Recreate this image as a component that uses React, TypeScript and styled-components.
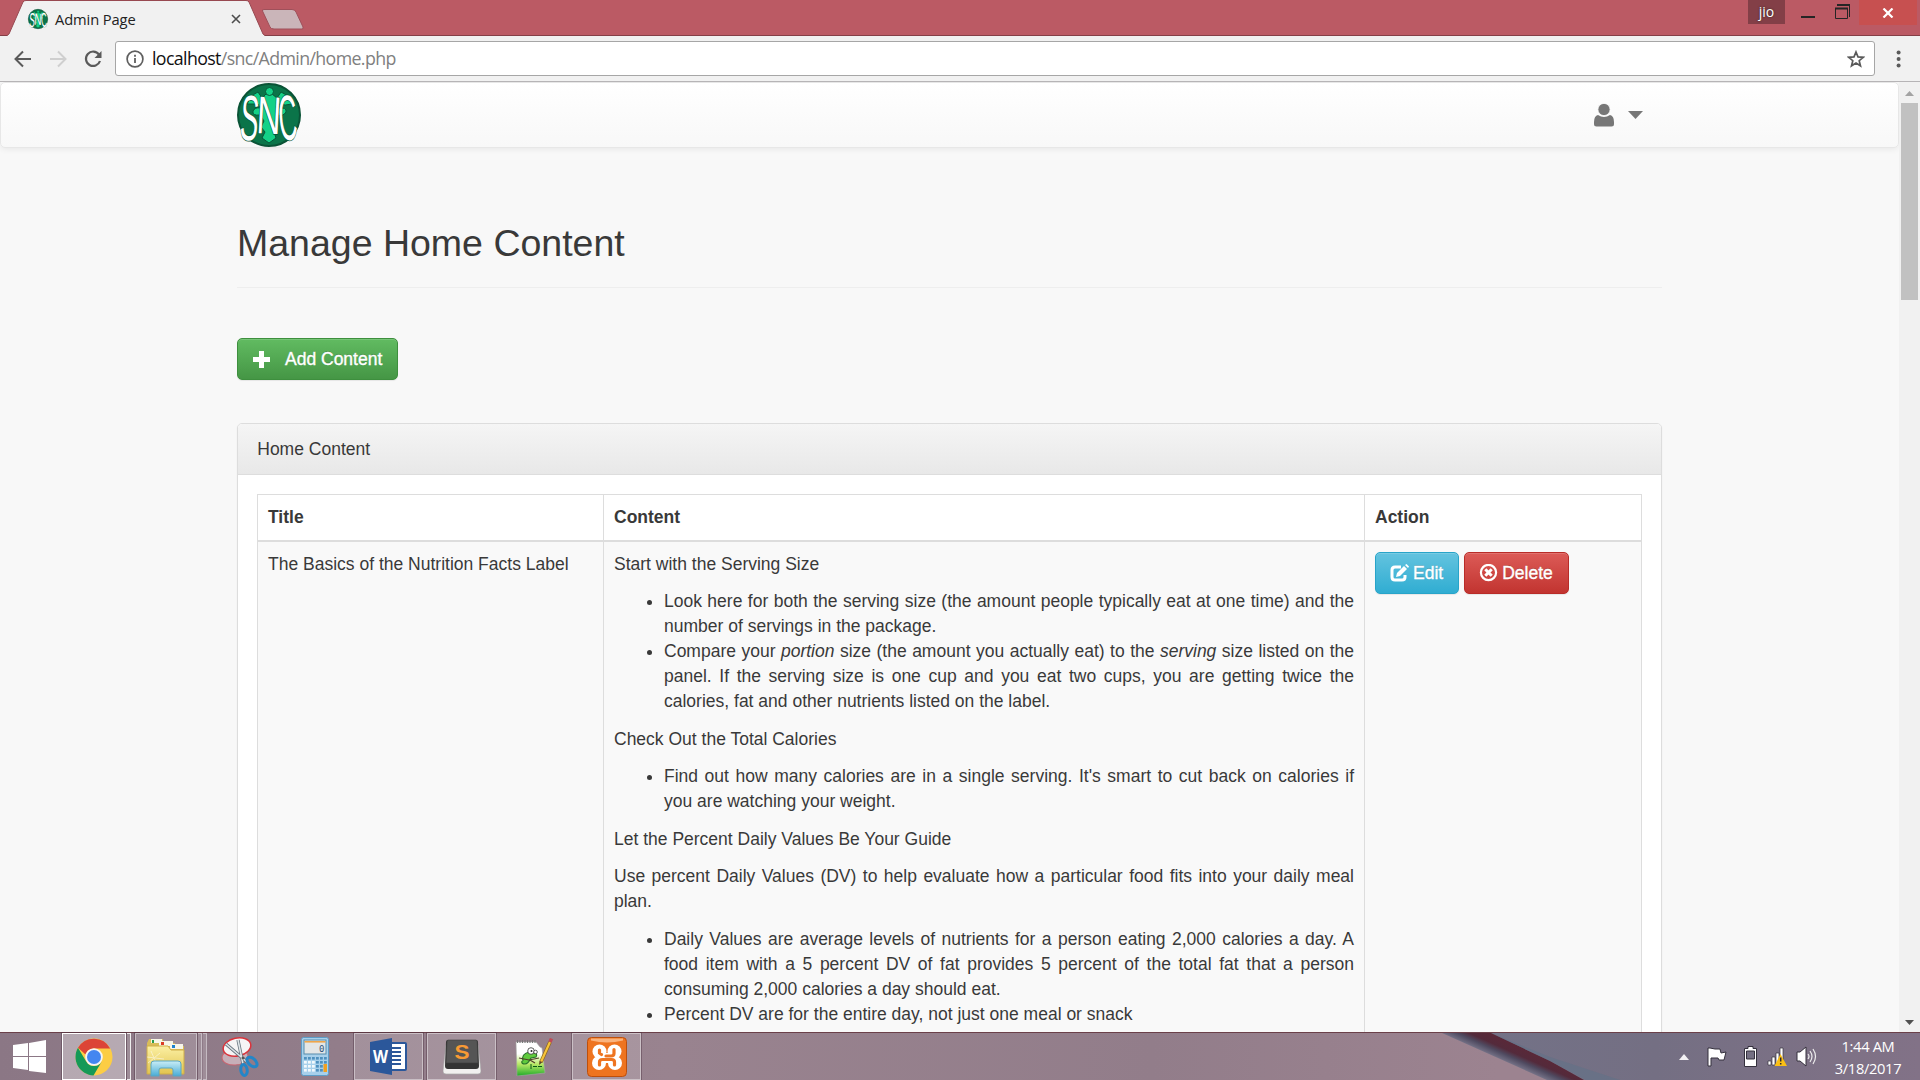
import React from "react";
import styled, { createGlobalStyle, css } from "styled-components";

const GlobalStyle = createGlobalStyle`
  *, *::before, *::after { box-sizing: border-box; }
  html, body { margin: 0; padding: 0; }
  body { overflow: hidden; background: #f8f8f8; }
  svg { display: block; flex: none; }
`;

const uiFont = `"Open Sans", "Noto Sans", sans-serif`;

const Screen = styled.div`
  width: 1920px;
  height: 1080px;
  display: flex;
  flex-direction: column;
  overflow: hidden;
  background: #f8f8f8;
  font-family: "Liberation Sans", Arial, sans-serif;
`;

/* Browser chrome */

const TitleBar = styled.header`
  height: 36px;
  flex: none;
  display: flex;
  align-items: flex-start;
  background: #bb5a64;
  border-bottom: 1px solid #843f47;
`;

const Tab = styled.div`
  position: relative;
  width: 258px;
  height: 36px;
  margin-left: 7px;
  padding: 0 24px 0 21px;
  display: flex;
  align-items: center;
  font: 14.7px ${uiFont};
  color: #222;
`;

const TabShape = styled.svg`
  position: absolute;
  left: 0;
  top: 0;
`;

const TabTitle = styled.span`
  position: relative;
  margin: 1px auto 0 7px;
  letter-spacing: -0.1px;
`;

const OnTab = styled.span`
  position: relative;
  top: 1px;
`;

const NewTab = styled.svg`
  margin: 9px 0 0 -4px;
`;

const WindowControls = styled.div`
  margin-left: auto;
  display: flex;
  align-items: flex-start;
  padding-right: 3px;
`;

const UserBadge = styled.div`
  width: 37px;
  height: 24px;
  background: #833f47;
  color: #fff;
  font: 14px/23px ${uiFont};
  text-align: center;
  text-shadow: 0 0 2px #222;
`;

const CloseButton = styled.div`
  width: 58px;
  height: 25px;
  background: #c75050;
  display: flex;
  align-items: center;
  justify-content: center;
`;

const Toolbar = styled.div`
  height: 46px;
  flex: none;
  display: flex;
  align-items: center;
  padding: 0 0 0 14px;
  background: #f1f1f1;
  border-bottom: 1px solid #b6b4b6;
`;

const NavIcons = styled.div`
  width: 101px;
  flex: none;
  display: flex;
  gap: 17px;
`;

const AddressBar = styled.div`
  width: 1760px;
  flex: none;
  height: 35px;
  display: flex;
  align-items: center;
  padding: 0 9px 0 10px;
  background: #fff;
  border: 1px solid #a6a6a6;
  border-radius: 3px;
`;

const Url = styled.span`
  margin: 0 auto 0 8px;
  font: 17.8px/33px ${uiFont};
  letter-spacing: -0.63px;
  color: #808080;
  b { font-weight: 400; color: #111; }
`;

/* Page */

const Viewport = styled.div`
  flex: 1;
  min-height: 0;
  display: flex;
`;

const Page = styled.main`
  width: 1899px;
  overflow: hidden;
  font-size: 17.5px;
  line-height: 25px;
  color: #393939;
`;

const Navbar = styled.nav`
  height: 66px;
  padding: 0 236px;
  display: flex;
  align-items: flex-start;
  justify-content: space-between;
  background: linear-gradient(#fff, #f8f8f8);
  border: 1px solid #e7e7e7;
  border-radius: 5px;
  box-shadow: inset 0 1px 0 rgba(255, 255, 255, 0.15), 0 1px 6px rgba(0, 0, 0, 0.075);
`;

const UserMenu = styled.div`
  display: flex;
  align-items: center;
  gap: 14px;
  padding: 20px 19px 0 0;
`;

const Container = styled.div`
  width: 1425px;
  margin: 75px 0 0 237px;
`;

const PageHeader = styled.div`
  padding-bottom: 10.25px;
  border-bottom: 1px solid #eee;
`;

const Heading = styled.h2`
  margin: 0 0 12.5px;
  font-size: 37.5px;
  font-weight: 500;
  line-height: 41.25px;
`;

type Tone = "success" | "info" | "danger";
const tones: Record<Tone, ReturnType<typeof css>> = {
  success: css`background: linear-gradient(#61bb61, #459645); border-color: #3e8f3e;`,
  info: css`background: linear-gradient(#63c3df, #30add2); border-color: #28a4c9;`,
  danger: css`background: linear-gradient(#dc5b57, #c23430); border-color: #b92c28;`,
};

const Button = styled.button<{ $tone: Tone; $gap?: number }>`
  height: 42px;
  padding: 0 15px 0 14px;
  display: inline-flex;
  align-items: center;
  gap: ${(p) => p.$gap ?? 4}px;
  border: 1px solid;
  border-radius: 5px;
  ${(p) => tones[p.$tone]}
  color: #fff;
  font: 17.5px/25px "Liberation Sans", Arial, sans-serif;
  -webkit-text-stroke: 0.35px #fff;
  text-shadow: 0 -1px 0 rgba(0, 0, 0, 0.2);
  box-shadow: inset 0 1px 0 rgba(255, 255, 255, 0.15), 0 1px 1px rgba(0, 0, 0, 0.075);
  white-space: nowrap;
`;

const AddRow = styled.div`
  display: flex;
  padding: 50px 0 43px;
`;

const Panel = styled.section`
  background: #fff;
  border: 1px solid #ddd;
  border-radius: 5px;
  box-shadow: 0 1px 2px rgba(0, 0, 0, 0.05);
`;

const PanelHeading = styled.div`
  height: 51px;
  padding: 12.5px 19.25px;
  background: linear-gradient(#f5f5f5, #e8e8e8);
  border-bottom: 1px solid #ddd;
  border-radius: 4px 4px 0 0;
`;

const PanelBody = styled.div`
  padding: 19px;
`;

const Table = styled.div`
  display: grid;
  grid-template-columns: 346px 761px 277px;
  border: 1px solid #ddd;
  border-right: 0;
`;

const Cell = styled.div<{ $head?: boolean }>`
  padding: 10px;
  border-right: 1px solid #ddd;
  ${(p) =>
    p.$head
      ? css`
          height: 47px;
          border-bottom: 2px solid #ddd;
          font-weight: 700;
        `
      : css`
          height: 620px;
          background: #f9f9f9;
        `}
`;

const Article = styled.div`
  margin-top: -0.25px;
  text-align: justify;
  p { margin: 0 0 12.5px; }
  ul { margin: 0 0 12.5px; padding-left: 50px; }
`;

const Actions = styled.div`
  display: flex;
  gap: 5px;
`;

const Scrollbar = styled.aside`
  width: 21px;
  padding: 9px 2px 7px;
  display: flex;
  flex-direction: column;
  align-items: center;
  background: #f1f1f1;
`;

const Thumb = styled.div`
  width: 17px;
  height: 197px;
  margin: 7px 0 auto;
  background: #c1c1c1;
`;

/* Taskbar */

const Taskbar = styled.footer`
  position: relative;
  height: 48px;
  flex: none;
  display: flex;
  border-top: 1px solid #6b4049;
  background: #927d8a;
`;

const Wallpaper = styled.svg`
  position: absolute;
  inset: 0;
`;

const TaskRow = styled.div`
  position: relative;
  flex: 1;
  display: flex;
  align-items: stretch;
`;

const Task = styled.div<{ $w: number; $ml?: number; $open?: boolean; $active?: boolean }>`
  width: ${(p) => p.$w}px;
  flex: none;
  margin-left: ${(p) => p.$ml ?? 0}px;
  display: flex;
  align-items: center;
  justify-content: center;
  ${(p) =>
    p.$open &&
    css`
      background: rgba(255, 255, 255, ${p.$active ? 0.36 : 0.15});
      border: 1px solid ${p.$active ? "#fff" : "rgba(255,255,255,.42)"};
      outline: 1px solid rgba(70, 45, 60, 0.4);
    `}
`;

const StackEdge = styled.div<{ $active?: boolean }>`
  width: 4px;
  margin-left: 1px;
  border: 1px solid ${(p) => (p.$active ? "#eee" : "rgba(255,255,255,.4)")};
  border-left: 0;
  background: rgba(255, 255, 255, 0.15);
`;

const Tray = styled.div`
  position: relative;
  display: flex;
  align-items: center;
  padding-right: 16px;
`;

const TrayIcon = styled.div<{ $ml: number }>`
  margin-left: ${(p) => p.$ml}px;
`;

const Clock = styled.div`
  width: 72px;
  margin-left: 15px;
  padding-top: 1px;
  text-align: center;
  color: #fff;
  font: 14.7px/22px ${uiFont};
  letter-spacing: -0.35px;
  white-space: nowrap;
`;

function SncLogo({ size }: { size: number }) {
  return (
    <svg width={size} height={size} viewBox="0 0 64 64" overflow="visible">
      <circle cx="32" cy="32" r="31" fill="#0b7449" stroke="#0a5336" strokeWidth="2" />
      <g fill="#14d187" stroke="#075637" strokeWidth="1">
        <path d="M10 21Q14 12 21 9L25 15 29 11H35L40 15 44 9Q53 13 55 21 48 23 42 21L41 25Q50 24 49 29 46 34 40 32L38 38 41 44 37 49 39 55 32 60 25 55 28 49 24 44 27 38 23 32Q15 33 16 28 18 24 23 25L21 21Z" />
        <circle cx="32.500" cy="8.500" r="4" />
      </g>
      <g fill="#fff" stroke="#075637" strokeWidth="1.500" paintOrder="stroke" fontFamily="Liberation Sans, Arial, sans-serif">
        <text transform="translate(2 56.500) rotate(4) scale(.43 1)" fontSize="64">S</text>
        <text transform="translate(19 50) rotate(3) scale(.63 1)" fontSize="53">N</text>
        <text transform="translate(43 57.500) rotate(-4) scale(.4 1)" fontSize="64">C</text>
      </g>
    </svg>
  );
}

const Glyph = ({ children }: { children: React.ReactNode }) => (
  <svg width="19" height="19" viewBox="0 0 19 19" fill="none" stroke="#fff">
    {children}
  </svg>
);

const Triangle = ({ w, h, color, up }: { w: number; h: number; color: string; up?: boolean }) => (
  <svg width={w} height={h} viewBox="0 0 10 10" preserveAspectRatio="none">
    <path d={up ? "M0 10 5 0 10 10z" : "M0 0H10L5 10z"} fill={color} />
  </svg>
);

function Chrome() {
  return (
    <svg width="38" height="38" viewBox="0 0 38 38">
      <circle cx="19" cy="19" r="18.500" fill="#fccd45" />
      <path d="M3 9.700A18.500 18.500 0 0 1 35.200 10.500H19a9 9 0 0 0-8.500 6z" fill="#dc4437" />
      <path d="M3 9.700A18.500 18.500 0 0 0 18.500 37.500L26.800 23.500A9 9 0 0 1 11.200 23.500z" fill="#159957" />
      <circle cx="19" cy="19" r="8.800" fill="#f5f5f5" />
      <circle cx="19" cy="19" r="7" fill="#4486f0" />
    </svg>
  );
}

function Explorer() {
  return (
    <svg width="40" height="40" viewBox="0 0 40 40">
      <defs>
        <linearGradient id="folder" x2="0" y2="1"><stop stopColor="#fbf0a4" /><stop offset="1" stopColor="#e2c44f" /></linearGradient>
        <linearGradient id="stand" x2="0" y2="1"><stop stopColor="#c9edf6" /><stop offset="1" stopColor="#49acd6" /></linearGradient>
      </defs>
      <path d="M3 2h14v4h12v3h9v28H1V6z" fill="#d9bd58" />
      <path d="M5 2h11v4H5z" fill="#f7f6e8" /><path d="M6 3h2v3H6z" fill="#299d48" />
      <path d="M13 4h14v5H13z" fill="#f7f6e8" /><path d="M15 5h3v3h-3z" fill="#dc3d24" />
      <path d="M24 7h13v5H24z" fill="#f7f6e8" /><path d="M26 8h3v3h-3z" fill="#1d83ce" />
      <path d="M1 9h21l3 4h13v24H1z" fill="url(#folder)" stroke="#cfae48" />
      <path d="M2 26 14 16M5 14l6 14M1 20l17 2" stroke="#fff" opacity=".5" />
      <path d="M5 39V27q0-3 3-3h24q3 0 3 3v12h-8v-6q0-2-2-2H15q-2 0-2 2v6z" fill="url(#stand)" stroke="#5ba7c3" />
    </svg>
  );
}

function Snipping() {
  return (
    <svg width="40" height="42" viewBox="0 0 40 42">
      <ellipse cx="14" cy="21" rx="13" ry="8" fill="#c6afb8" stroke="#ca646f" transform="rotate(-5 14 21)" />
      <ellipse cx="16" cy="11" rx="14" ry="9" fill="#f6f4f5" stroke="#d9343c" strokeWidth="1.500" transform="rotate(-12 16 11)" />
      <path d="m5 8 21 18M17 4l5 24" stroke="#66737d" strokeWidth="3.200" /><path d="m5 8 21 18M17 4l5 24" stroke="#dfe5e8" strokeWidth="1.600" />
      <g fill="none" stroke="#2386c7" strokeWidth="3"><ellipse cx="31" cy="26" rx="3.500" ry="6" transform="rotate(-48 31 26)" /><ellipse cx="23" cy="34" rx="3.200" ry="5.500" transform="rotate(-8 23 34)" /></g>
      <circle cx="22" cy="22" r="1.500" fill="#555" />
    </svg>
  );
}

function Calculator() {
  return (
    <svg width="28" height="39" viewBox="0 0 28 39">
      <rect x=".5" y=".5" width="27" height="38" rx="2" fill="#a7d0eb" stroke="#5d9dc7" />
      <rect x="3" y="3" width="22" height="14" fill="#e3e6e6" stroke="#568bac" />
      <path d="M3.500 4.800h21" stroke="#efa343" strokeWidth="1.500" />
      <text x="18" y="15" fontFamily="DejaVu Sans Mono, monospace" fontSize="9" fill="#315579">0</text>
      {[20, 24, 28, 32].map((y) => [3, 7, 11, 15, 19, 23].map((x) => <rect key={`${x}-${y}`} x={x} y={y} width="2.800" height="2.600" fill={x < 12 && y > 20 ? "#f3f9fc" : "#4f91bf"} />))}
      <rect x="22.500" y="27" width="3.500" height="8" fill="#f2a01e" />
    </svg>
  );
}

function Word() {
  return (
    <svg width="37" height="37" viewBox="0 0 37 37">
      <rect x="18" y="5" width="18" height="27" rx="1" fill="#fff" stroke="#2b579a" strokeWidth="2" />
      <path d="M20 10h11M20 14h11M20 18h11M20 22h11M20 26h11" stroke="#2b579a" strokeWidth="2" />
      <path d="M0 4 22 0v37L0 33z" fill="#2b579a" />
      <text x="3" y="25" textLength="15" lengthAdjust="spacingAndGlyphs" fontFamily="Open Sans, sans-serif" fontWeight="700" fontSize="17" fill="#fff">W</text>
    </svg>
  );
}

function Sublime() {
  return (
    <svg width="38" height="36" viewBox="0 0 38 36">
      <path d="M3 6h32l3 26q0 3-3 3H3q-3 0-3-3z" fill="#f1f0ef" stroke="#aaa" strokeWidth=".7" />
      <path d="M5 1h28q2 0 2 2l1 24q0 3-3 3H5q-3 0-3-3L3 3q0-2 2-2z" fill="#343434" />
      <path d="M5 1h28q1 0 1.200 2l.8 21H3L4 3q0-2 1-2z" fill="#555" stroke="#3c3c3c" strokeWidth=".6" />
      <text x="11.500" y="20" textLength="15" lengthAdjust="spacingAndGlyphs" fontFamily="Liberation Sans, Arial, sans-serif" fontWeight="700" fontSize="20" fill="#f89a34">S</text>
    </svg>
  );
}

function NotepadPlus() {
  return (
    <svg width="39" height="38" viewBox="0 0 39 38">
      <defs><linearGradient id="sheet" x2="0" y2="1"><stop offset=".35" stopColor="#fff" /><stop offset=".65" stopColor="#b9e967" /><stop offset="1" stopColor="#1faa28" /></linearGradient></defs>
      <path d="M1 4h20l4 5 2 1 3 25L2 38z" fill="url(#sheet)" stroke="#a5aaa5" strokeWidth=".6" />
      <path d="M2 3.500h19" stroke="#777" strokeWidth="3" strokeDasharray="1 1.500" />
      <path d="M8 23q-2-7 6-9l5 0q4 2 2 5l-5 1q-3 6-6 6-4 0-3-3" fill="#60ca3c" stroke="#28752c" strokeWidth="1.200" />
      <circle cx="16" cy="13" r="3.300" fill="#fff" stroke="#333" strokeWidth=".8" /><circle cx="20.500" cy="14" r="1.800" fill="#fff" stroke="#333" strokeWidth=".8" />
      <circle cx="16.500" cy="13" r="1" fill="#222" />
      <path d="m4 20 10 2 10-2m-9 2 5 3" fill="none" stroke="#503d28" strokeWidth="1.200" />
      <path d="M16 26v5m2-2.500h4m1 0h4" stroke="#0b5916" />
      <path d="m26 24 9-20" stroke="#8c6517" strokeWidth="3.500" /><path d="m26 24 9-20" stroke="#f8c43b" strokeWidth="2.200" />
      <path d="m35 4 1.500-3.500" stroke="#bf4b56" strokeWidth="3.500" /><path d="m24 27 .5-4 3 1z" fill="#5b4428" />
    </svg>
  );
}

function Xampp() {
  return (
    <svg width="40" height="40" viewBox="0 0 40 40">
      <rect x=".5" y=".5" width="39" height="39" rx="4" fill="#ee7420" stroke="#bd4f0c" />
      <path d="M4 1.500h32v2q-16 4-32 0z" fill="#fab37d" />
      <g fill="#fff">
        <circle cx="12.500" cy="14.500" r="7" />
        <circle cx="27.500" cy="14.500" r="7" />
        <circle cx="12" cy="26" r="7" />
        <circle cx="28" cy="26" r="7" />
        <path d="M13 16h14v10H13z" />
      </g>
      <path d="M12.500 13v3l2 1.500M27 12.500v4q0 2.500-3 2.500h-5M12.500 28v-3q0-2.500 3-2.500h9q3 0 3 2.500v3" fill="none" stroke="#ee7420" strokeWidth="3.200" strokeLinecap="round" />
    </svg>
  );
}

export default function App() {
  return (
    <Screen>
      <GlobalStyle />
      <TitleBar>
        <Tab>
          <TabShape width="258" height="36">
            <path d="M0 36 2 34 16 2Q17 .5 19 .5H239Q241 .5 242 2L256 34 258 36z" fill="#f1f1f1" />
            <path d="M0 35.500 2 34 16 2Q17 .5 19 .5H239Q241 .5 242 2L256 34 258 35.500" fill="none" stroke="#984951" />
          </TabShape>
          <OnTab><SncLogo size={20} /></OnTab>
          <TabTitle>Admin Page</TabTitle>
          <OnTab>
            <svg width="10" height="10"><path d="m1 1 8 8m0-8-8 8" stroke="#4d4d4d" strokeWidth="1.600" /></svg>
          </OnTab>
        </Tab>
        <NewTab width="44" height="21">
          <path d="M3 .5H31Q34 .5 35 3L42 18Q42.500 20 41 20H13Q10 20 9 18L1.500 2Q1 .5 3 .5z" fill="#cab5b9" stroke="#9f505a" />
        </NewTab>
        <WindowControls>
          <UserBadge>jio</UserBadge>
          <svg width="74" height="25">
            <path d="M16 17h14" stroke="#252525" strokeWidth="2" />
            <path d="M50.500 8.500h12v10h-12z" fill="none" stroke="#252525" />
            <path d="M50 8.500h13M52 5h13" stroke="#252525" strokeWidth="2" />
            <path d="M64.500 5v12" stroke="#252525" />
          </svg>
          <CloseButton>
            <svg width="12" height="10"><path d="m1.500.5 9 9m0-9-9 9" stroke="#fff" strokeWidth="2.200" /></svg>
          </CloseButton>
        </WindowControls>
      </TitleBar>

      <Toolbar>
        <NavIcons>
          <svg width="18" height="18" fill="none" stroke="#5a5a5a" strokeWidth="2"><path d="M17 9H2M9 1.500 1.500 9 9 16.500" /></svg>
          <svg width="18" height="18" fill="none" stroke="#cfcfcf" strokeWidth="2"><path d="M1 9h15M9 1.500 16.500 9 9 16.500" /></svg>
          <svg width="18" height="18"><path d="M15 4.500A7.200 7.200 0 1 0 16 11" fill="none" stroke="#5a5a5a" strokeWidth="2.200" /><path d="M17.500 1v7h-7z" fill="#5a5a5a" /></svg>
        </NavIcons>
        <AddressBar>
          <svg width="18" height="18"><circle cx="9" cy="9" r="7.900" fill="none" stroke="#5f5f5f" strokeWidth="1.700" /><path d="M9 8v5M9 4.800v2" stroke="#5f5f5f" strokeWidth="1.800" /></svg>
          <Url><b>localhost</b>/snc/Admin/home.php</Url>
          <svg width="18" height="18" viewBox="0 0 18 18"><path d="m9 2 2 4.900 5.200.4-4 3.400 1.300 5.100L9 13l-4.500 2.800 1.300-5.100-4-3.400 5.200-.4z" fill="none" stroke="#5a5a5a" strokeWidth="1.700" /></svg>
        </AddressBar>
        <svg width="45" height="20" fill="#5a5a5a"><circle cx="23.600" cy="3.500" r="2" /><circle cx="23.600" cy="10" r="2" /><circle cx="23.600" cy="16.500" r="2" /></svg>
      </Toolbar>

      <Viewport>
        <Page>
          <Navbar>
            <SncLogo size={64} />
            <UserMenu>
              <svg width="20" height="24" viewBox="0 0 20 24" fill="#777">
                <path d="M0 19q0-6 4-7 6 4 12 0 4 1 4 7v2q0 2.500-2.500 2.500h-15Q0 23.500 0 21z" />
                <circle cx="10" cy="6.500" r="6.100" stroke="#fcfcfc" strokeWidth=".8" />
              </svg>
              <Triangle w={15} h={8} color="#777" />
            </UserMenu>
          </Navbar>
          <Container>
            <PageHeader><Heading>Manage Home Content</Heading></PageHeader>
            <AddRow>
              <Button $tone="success" $gap={14}>
                <Glyph><path d="M9.500 1v17M1 9.500h17" strokeWidth="5" /></Glyph>
                Add Content
              </Button>
            </AddRow>
            <Panel>
              <PanelHeading>Home Content</PanelHeading>
              <PanelBody>
                <Table>
                  <Cell $head>Title</Cell>
                  <Cell $head>Content</Cell>
                  <Cell $head>Action</Cell>
                  <Cell>The Basics of the Nutrition Facts Label</Cell>
                  <Cell>
                    <Article>
                      <p>Start with the Serving Size</p>
                      <ul>
                        <li>Look here for both the serving size (the amount people typically eat at one time) and the number of servings in the package.</li>
                        <li>Compare your <em>portion</em> size (the amount you actually eat) to the <em>serving</em> size listed on the panel. If the serving size is one cup and you eat two cups, you are getting twice the calories, fat and other nutrients listed on the label.</li>
                      </ul>
                      <p>Check Out the Total Calories</p>
                      <ul>
                        <li>Find out how many calories are in a single serving. It's smart to cut back on calories if you are watching your weight.</li>
                      </ul>
                      <p>Let the Percent Daily Values Be Your Guide</p>
                      <p>Use percent Daily Values (DV) to help evaluate how a particular food fits into your daily meal plan.</p>
                      <ul>
                        <li>Daily Values are average levels of nutrients for a person eating 2,000 calories a day. A food item with a 5 percent DV of fat provides 5 percent of the total fat that a person consuming 2,000 calories a day should eat.</li>
                        <li>Percent DV are for the entire day, not just one meal or snack</li>
                      </ul>
                    </Article>
                  </Cell>
                  <Cell>
                    <Actions>
                      <Button $tone="info">
                        <Glyph>
                          <path d="M11 3H5Q2 3 2 6v7q0 3 3 3h7q3 0 3-3v-2" strokeWidth="3" />
                          <path d="m6 13 1-4 7-7 3 3-7 7z" fill="#fff" stroke="none" />
                          <path d="m15 1 1.500-1L19 2.500 18 4z" fill="#fff" stroke="none" />
                        </Glyph>
                        Edit
                      </Button>
                      <Button $tone="danger">
                        <Glyph>
                          <circle cx="9.500" cy="8.500" r="7.600" strokeWidth="2.200" />
                          <path d="m6.300 5.300 6.400 6.400m0-6.400-6.400 6.400" strokeWidth="3" />
                        </Glyph>
                        Delete
                      </Button>
                    </Actions>
                  </Cell>
                </Table>
              </PanelBody>
            </Panel>
          </Container>
        </Page>
        <Scrollbar>
          <Triangle w={9} h={5} color="#a3a3a3" up />
          <Thumb />
          <Triangle w={9} h={5} color="#505050" />
        </Scrollbar>
      </Viewport>

      <Taskbar>
        <Wallpaper width="1920" height="47">
          <defs>
            <linearGradient id="left"><stop stopColor="#8b7785" /><stop offset=".35" stopColor="#99838f" /><stop offset=".6" stopColor="#927d8a" /><stop offset=".78" stopColor="#9c8390" /></linearGradient>
            <linearGradient id="right"><stop stopColor="#737287" /><stop offset=".4" stopColor="#746f83" /><stop offset="1" stopColor="#827287" /></linearGradient>
            <linearGradient id="streak" gradientUnits="userSpaceOnUse" x1="1491" y1="0" x2="1483" y2="18"><stop stopColor="#5a2838" /><stop offset=".45" stopColor="#542a3b" /><stop offset=".7" stopColor="#4f4a60" /><stop offset="1" stopColor="#716e83" /></linearGradient>
          </defs>
          <rect width="1920" height="47" fill="url(#left)" />
          <path d="M1480 0H1920V47H1570z" fill="url(#right)" />
          <path d="M1442 0H1491L1550 28L1584 47H1547z" fill="url(#streak)" />
          <path d="M1491 0 1550 24 1620 47H1586L1550 28z" fill="#5d7188" opacity=".5" />
        </Wallpaper>
        <TaskRow>
          <Task $w={60}>
            <svg width="34" height="34" fill="#fff"><path d="M0 5 15 3v13H0zM16 3 33 0v16H16zM0 17h15v13L0 28zM16 17h17v16l-17-2z" /></svg>
          </Task>
          <Task $w={64} $ml={2} $open $active><Chrome /></Task>
          <StackEdge $active />
          <Task $w={62} $ml={4} $open><Explorer /></Task>
          <StackEdge />
          <StackEdge />
          <Task $w={40} $ml={14}><Snipping /></Task>
          <Task $w={28} $ml={40}><Calculator /></Task>
          <Task $w={69} $ml={25} $open><Word /></Task>
          <Task $w={69} $ml={4} $open><Sublime /></Task>
          <Task $w={39} $ml={19}><NotepadPlus /></Task>
          <Task $w={69} $ml={18} $open><Xampp /></Task>
        </TaskRow>
        <Tray>
          <TrayIcon $ml={0}><Triangle w={10} h={6} color="#f3f1f4" up /></TrayIcon>
          <TrayIcon $ml={18}>
            <svg width="20" height="20"><path d="M1 1h2l5 1h5l1 4 5-1-2 8h-5l-1-2H4v8H1z" fill="#fff" stroke="#34303d" /></svg>
          </TrayIcon>
          <TrayIcon $ml={17}>
            <svg width="13" height="21"><path d="M4 .5h5v2h3.500v18H.5v-18H4z" fill="#fff" stroke="#34303d" /><path d="M2.500 5h8v8h-8z" fill="#746f82" stroke="#34303d" /></svg>
          </TrayIcon>
          <TrayIcon $ml={10}>
            <svg width="20" height="21">
              <path d="M1 15h3v4H1zM5 11h3v8H5zM9 7h3v12H9zM13 2h3v17h-3z" fill="#fff" stroke="#34303d" strokeWidth=".7" />
              <path d="M13.500 8 20 20H7.500z" fill="#fbbf13" /><path d="M13.700 11.500v4M13.700 17v1.500" stroke="#302d2d" strokeWidth="1.500" />
            </svg>
          </TrayIcon>
          <TrayIcon $ml={9}>
            <svg width="21" height="21"><path d="M1 6h3l6-5v19l-6-5H1z" fill="#fff" stroke="#34303d" /><path d="M12 8q2 2.500 0 5m2-8q4 5.500 0 11m3-13q5 7.500 0 15" fill="none" stroke="#eee" strokeWidth="1.200" /></svg>
          </TrayIcon>
          <Clock>1:44 AM<br />3/18/2017</Clock>
        </Tray>
      </Taskbar>
    </Screen>
  );
}
